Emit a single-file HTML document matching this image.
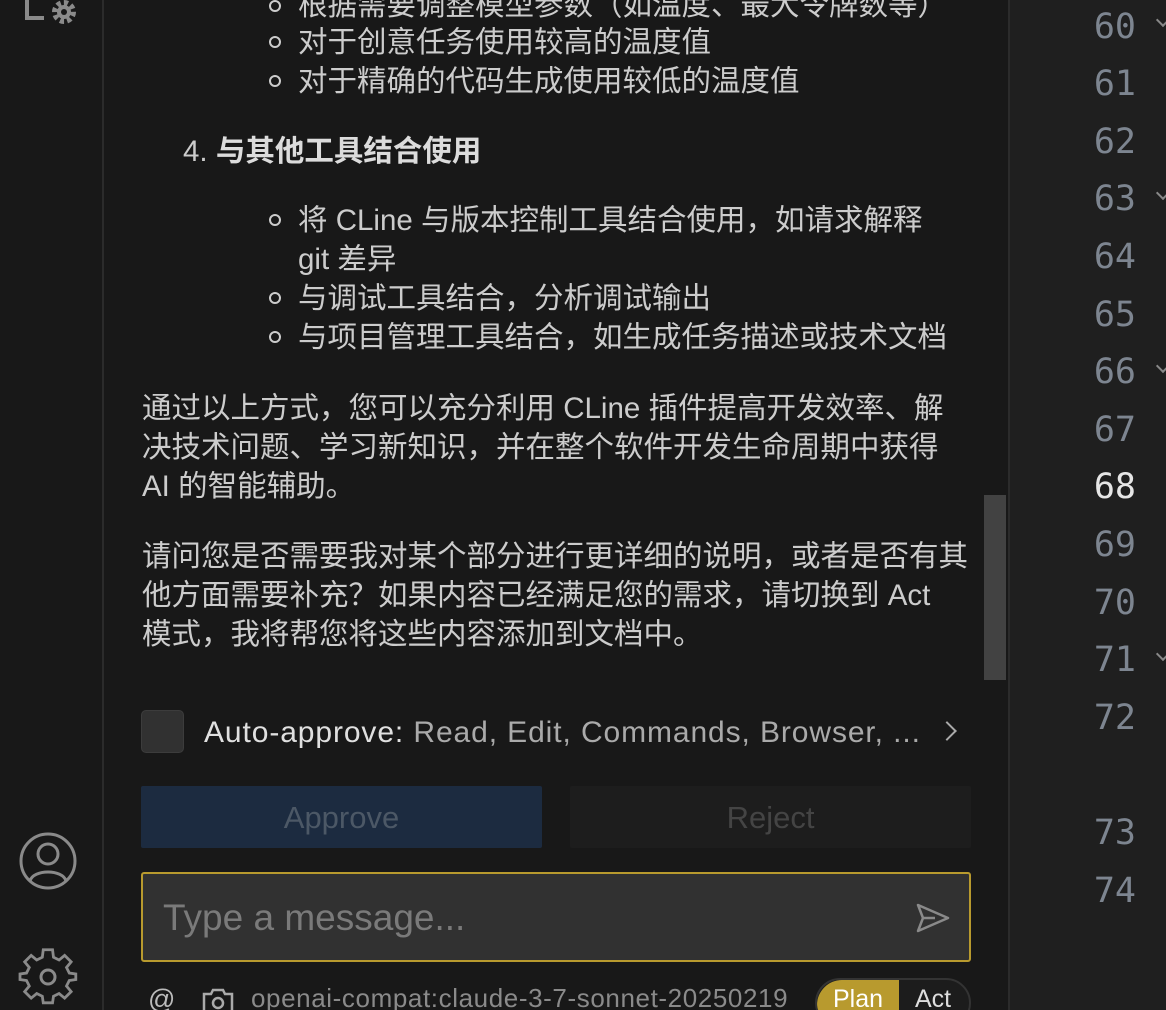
<!DOCTYPE html>
<html><head><meta charset="utf-8"><style>
*{margin:0;padding:0;box-sizing:border-box}
html,body{width:1166px;height:1010px;overflow:hidden}
body{background:#181818;position:relative;font-family:"Liberation Sans","Noto Sans CJK SC",sans-serif;color:#cccccc}
.ab{position:absolute;left:0;top:0;width:104px;height:1010px;background:#181818;border-right:2px solid #2b2b2b}
.ed{position:absolute;left:1008px;top:0;width:158px;height:1010px;background:#1f1f1f;border-left:2px solid #2b2b2b}
.l{position:absolute;white-space:nowrap;font-size:29.5px;line-height:39px}
.b{position:absolute;width:12px;height:12px;border:2px solid #cccccc;border-radius:50%}
.n{position:absolute;right:30px;font-family:"DejaVu Sans Mono","Liberation Mono",monospace;font-size:35px;color:#7d8590;line-height:40px}
.ch{position:absolute;left:1158px;width:10px;height:10px;border-right:2px solid #888;border-bottom:2px solid #888;transform:rotate(45deg)}
</style></head><body>
<div class="ab">
<svg style="position:absolute;left:20px;top:-14px" width="60" height="40" viewBox="0 0 60 40"><path d="M7 4 V32 H24" stroke="#8a8a8a" stroke-width="4" fill="none"/><circle cx="44" cy="26" r="9" fill="none" stroke="#8a8a8a" stroke-width="6" stroke-dasharray="4 3"/><circle cx="44" cy="26" r="7" fill="#8a8a8a"/><circle cx="44" cy="26" r="3" fill="#181818"/></svg>
<svg style="position:absolute;left:18px;top:831px" width="60" height="60" viewBox="0 0 60 60"><circle cx="30" cy="30" r="27" fill="none" stroke="#8a8a8a" stroke-width="3"/><circle cx="30" cy="23" r="10" fill="none" stroke="#8a8a8a" stroke-width="3"/><path d="M12 50 C15 38 45 38 48 50" fill="none" stroke="#8a8a8a" stroke-width="3"/></svg>
<svg style="position:absolute;left:18px;top:947px" width="60" height="60" viewBox="0 0 60 60"><path d="M25 3 H35 L36 11 L42 14 L48 9 L55 16 L50 22 L53 28 L60 29 V35 L53 36 L50 42 L55 48 L48 55 L42 50 L36 53 L35 60 H25 L24 53 L18 50 L12 55 L5 48 L10 42 L7 36 L0 35 V29 L7 28 L10 22 L5 16 L12 9 L18 14 L24 11 Z" fill="none" stroke="#8a8a8a" stroke-width="3" transform="translate(2 0) scale(0.93)"/><circle cx="30" cy="30" r="7" fill="none" stroke="#8a8a8a" stroke-width="3"/></svg>
</div>

<div class="b" style="left:269px;top:0px"></div><div class="l" style="left:298px;top:-14px">根据需要调整模型参数（如温度、最大令牌数等）</div>
<div class="b" style="left:269px;top:36px"></div><div class="l" style="left:298px;top:23px">对于创意任务使用较高的温度值</div>
<div class="b" style="left:269px;top:75px"></div><div class="l" style="left:298px;top:62px">对于精确的代码生成使用较低的温度值</div>
<div class="l" style="left:183px;top:132px">4. <b style="color:#dcdcdc">与其他工具结合使用</b></div>
<div class="b" style="left:269px;top:214px"></div><div class="l" style="left:298px;top:201px">将 CLine 与版本控制工具结合使用，如请求解释</div>
<div class="l" style="left:298px;top:240px">git 差异</div>
<div class="b" style="left:269px;top:292px"></div><div class="l" style="left:298px;top:279px">与调试工具结合，分析调试输出</div>
<div class="b" style="left:269px;top:331px"></div><div class="l" style="left:298px;top:318px">与项目管理工具结合，如生成任务描述或技术文档</div>
<div class="l" style="left:142px;top:389px">通过以上方式，您可以充分利用 CLine 插件提高开发效率、解</div>
<div class="l" style="left:142px;top:428px">决技术问题、学习新知识，并在整个软件开发生命周期中获得</div>
<div class="l" style="left:142px;top:467px">AI 的智能辅助。</div>
<div class="l" style="left:142px;top:537px">请问您是否需要我对某个部分进行更详细的说明，或者是否有其</div>
<div class="l" style="left:142px;top:576px">他方面需要补充？如果内容已经满足您的需求，请切换到 Act</div>
<div class="l" style="left:142px;top:615px">模式，我将帮您将这些内容添加到文档中。</div>

<div style="position:absolute;left:984px;top:495px;width:22px;height:185px;background:#424242"></div>

<div style="position:absolute;left:141px;top:710px;width:43px;height:43px;background:#313131;border:1px solid #3c3c3c;border-radius:5px"></div>
<div class="l" style="left:204px;top:713px;color:#e0e0e0;font-size:30px;letter-spacing:0.9px">Auto-approve: <span style="color:#aaaaaa">Read, Edit, Commands, Browser, ...</span></div>
<div style="position:absolute;left:940px;top:724px;width:14px;height:14px;border-right:2px solid #aaa;border-top:2px solid #aaa;transform:rotate(45deg)"></div>

<div style="position:absolute;left:141px;top:786px;width:401px;height:62px;background:#1c2b40;border-radius:2px;color:#4c5866;font-size:31px;text-align:center;line-height:64px">Approve</div>
<div style="position:absolute;left:570px;top:786px;width:401px;height:62px;background:#1d1d1d;border-radius:2px;color:#444;font-size:31px;text-align:center;line-height:64px">Reject</div>

<div style="position:absolute;left:141px;top:872px;width:830px;height:90px;background:#313131;border:2px solid #b89a2e;border-radius:3px"></div>
<div class="l" style="left:163px;top:896px;color:#7a7a7a;font-size:37px;line-height:44px">Type a message...</div>
<svg style="position:absolute;left:915px;top:902px" width="36" height="32" viewBox="0 0 36 32"><path d="M3 3 L33 16 L3 29 L8 16 Z M8 16 H20" fill="none" stroke="#8a8a8a" stroke-width="2.5" stroke-linejoin="round"/></svg>

<div class="l" style="left:148px;top:980px;font-size:27px;color:#bbb">@</div>
<svg style="position:absolute;left:202px;top:988px" width="32" height="26" viewBox="0 0 32 26"><path d="M2 6 H9 L11 2 H21 L23 6 H30 V26 H2 Z" fill="none" stroke="#aaa" stroke-width="2.5"/><circle cx="16" cy="15" r="5" fill="none" stroke="#aaa" stroke-width="2.5"/></svg>
<div class="l" style="left:251px;top:979px;font-size:26px;letter-spacing:0.6px;color:#8a8a8a">openai-compat:claude-3-7-sonnet-20250219</div>
<div style="position:absolute;left:815px;top:978px;width:156px;height:50px;border:2px solid #333;border-radius:25px;background:#1c1c1c;overflow:hidden">
<div style="position:absolute;left:0;top:0;width:82px;height:50px;background:#b89a2e;border-radius:25px 0 0 25px"></div>
<div class="l" style="left:16px;top:0px;font-size:25px;color:#fff">Plan</div>
<div class="l" style="left:98px;top:0px;font-size:25px;color:#ddd">Act</div>
</div>

<div class="ed"></div>
<div class="n" style="top:7px">60</div><div class="ch" style="top:15px"></div>
<div class="n" style="top:64px">61</div>
<div class="n" style="top:122px">62</div>
<div class="n" style="top:179px">63</div><div class="ch" style="top:188px"></div>
<div class="n" style="top:237px">64</div>
<div class="n" style="top:295px">65</div>
<div class="n" style="top:352px">66</div><div class="ch" style="top:361px"></div>
<div class="n" style="top:410px">67</div>
<div class="n" style="top:467px;color:#e6e6e6">68</div>
<div class="n" style="top:525px">69</div>
<div class="n" style="top:583px">70</div>
<div class="n" style="top:640px">71</div><div class="ch" style="top:649px"></div>
<div class="n" style="top:698px">72</div>
<div class="n" style="top:813px">73</div>
<div class="n" style="top:871px">74</div>
</body></html>
